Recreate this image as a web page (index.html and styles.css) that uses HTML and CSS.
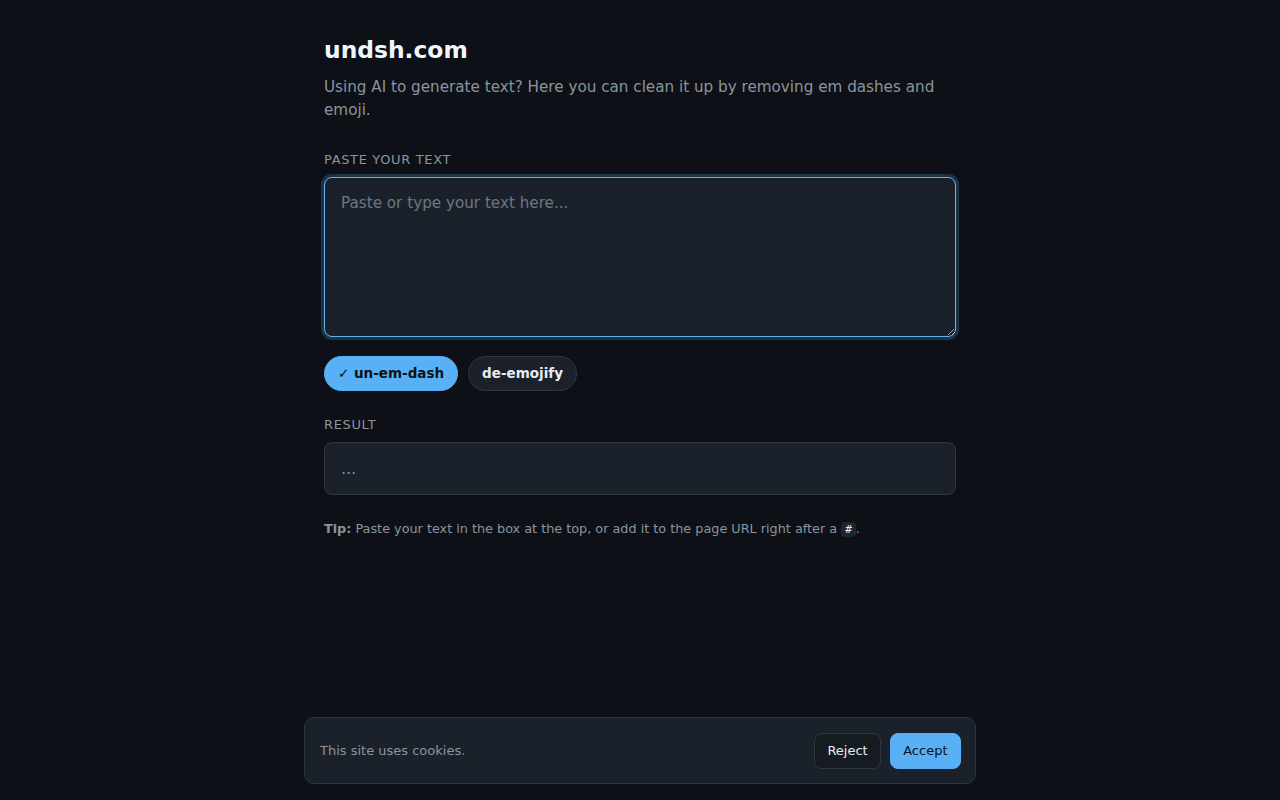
FILE: index.html
```html
<!DOCTYPE html>
<html lang="en">
<head>
<meta charset="utf-8">
<title>undsh.com</title>
<link rel="stylesheet" href="styles.css">
</head>
<body>
<main class="page">
  <h1 class="title">undsh.com</h1>
  <p class="lede">Using AI to generate text? Here you can clean it up by removing em dashes and emoji.</p>

  <label class="label" for="input">Paste your text</label>
  <textarea id="input" class="input" placeholder="Paste or type your text here..."></textarea>

  <div class="chips">
    <button class="chip chip-on">✓ un-em-dash</button>
    <button class="chip">de-emojify</button>
  </div>

  <div class="label label-result">Result</div>
  <div class="result">…</div>

  <p class="tip"><strong>Tip:</strong> Paste your text in the box at the top, or add it to the page URL right after a <code>#</code>.</p>
</main>

<div class="cookie">
  <span class="cookie-text">This site uses cookies.</span>
  <div class="cookie-actions">
    <button class="btn btn-ghost">Reject</button>
    <button class="btn btn-primary">Accept</button>
  </div>
</div>
</body>
</html>
```

FILE: styles.css
```css
* { box-sizing: border-box; }
html, body { height: 100%; }
body {
  margin: 0;
  background: #0d1117;
  color: #e6edf3;
  font-family: "DejaVu Sans", sans-serif;
}
.page {
  width: 632px;
  margin: 0 auto;
  padding-top: 35px;
}
.title {
  margin: 0;
  font-size: 23.4px;
  line-height: 30px;
  font-weight: 700;
  color: #f0f6fc;
}
.lede {
  margin: 11px 0 0;
  font-size: 15.2px;
  line-height: 23px;
  color: #8b949e;
}
.label {
  display: block;
  margin-top: 30px;
  font-size: 13px;
  line-height: 16px;
  letter-spacing: 0.05em;
  text-transform: uppercase;
  color: #8b949e;
}
.input {
  display: block;
  width: 100%;
  height: 160px;
  margin-top: 9px;
  padding: 13px 16px;
  background: #1b212b;
  border: 1px solid #64b3ef;
  border-radius: 8px;
  box-shadow: 0 0 0 3px rgba(88, 177, 246, 0.22);
  color: #e6edf3;
  font-family: "DejaVu Sans", sans-serif;
  font-size: 15.2px;
  line-height: 24px;
  resize: vertical;
  outline: none;
}
.input::placeholder { color: #6e7681; }
.chips {
  display: flex;
  gap: 10px;
  margin-top: 19px;
}
.chip {
  height: 35px;
  padding: 0 13px 1px;
  border-radius: 999px;
  border: 1px solid #30363d;
  background: #1b212b;
  color: #e6edf3;
  font-family: "DejaVu Sans", sans-serif;
  font-size: 13.5px;
  font-weight: 700;
}
.chip-on {
  background: #58b1f6;
  border-color: #58b1f6;
  color: #0d1117;
}
.label-result { margin-top: 26px; }
.result {
  margin-top: 9px;
  height: 53px;
  padding: 14px 16px;
  background: #1b212b;
  border: 1px solid #30363d;
  border-radius: 8px;
  color: #8b949e;
  font-size: 15.2px;
  line-height: 24px;
}
.tip {
  margin: 24px 0 0;
  font-size: 12.8px;
  line-height: 20px;
  color: #8b949e;
}
.tip strong { color: #8b949e; }
.tip code {
  font-family: "DejaVu Sans Mono", monospace;
  font-size: 11px;
  padding: 1px 4px;
  border-radius: 4px;
  background: #1f252e;
  color: #e6edf3;
}
.cookie {
  position: fixed;
  left: 50%;
  bottom: 16px;
  transform: translateX(-50%);
  width: 672px;
  height: 67px;
  padding: 0 14px 0 15px;
  display: flex;
  align-items: center;
  justify-content: space-between;
  background: #1b212b;
  border: 1px solid #30363d;
  border-radius: 10px;
}
.cookie-text {
  font-size: 13px;
  color: #8b949e;
}
.cookie-actions {
  display: flex;
  gap: 9px;
}
.btn {
  height: 36px;
  padding: 0 12px;
  border-radius: 8px;
  font-family: "DejaVu Sans", sans-serif;
  font-size: 13px;
}
.btn-ghost {
  background: #161b22;
  border: 1px solid #30363d;
  color: #e6edf3;
}
.btn-primary {
  padding: 0 12.5px;
  background: #58b1f6;
  border: 1px solid #58b1f6;
  color: #0d1117;
}
```
